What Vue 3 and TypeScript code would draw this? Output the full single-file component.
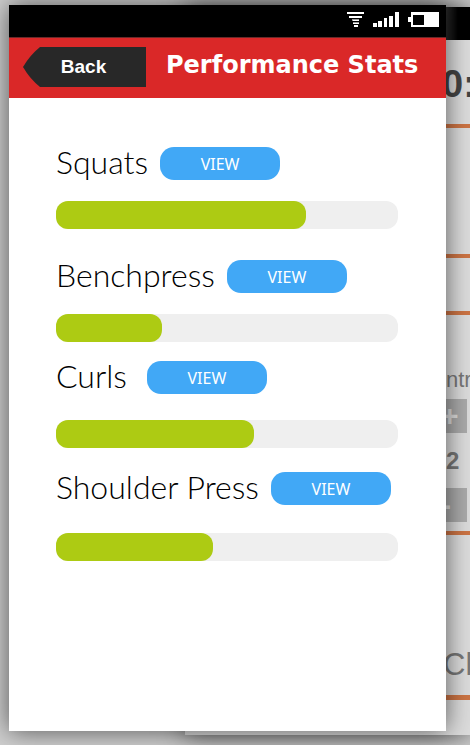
<script setup lang="ts">
interface Exercise {
  id: string
  name: string
  progress: number
  spacing: string
}

const exercises: Exercise[] = [
  { id: 'squats', name: 'Squats', progress: 73, spacing: 'regular' },
  { id: 'benchpress', name: 'Benchpress', progress: 31, spacing: 'loose' },
  { id: 'curls', name: 'Curls', progress: 58, spacing: 'tight' },
  { id: 'shoulder-press', name: 'Shoulder Press', progress: 46, spacing: 'deep' },
]
</script>

<template>
  <div class="stage">
    <aside class="backdrop" aria-hidden="true">
      <div class="backdrop-status"></div>
      <div class="timer">0:</div>
      <div class="panel panel-tall"></div>
      <div class="panel panel-short"></div>
      <div class="panel counter">
        <span class="counter-label">ntr</span>
        <span class="step">+</span>
        <span class="count">2</span>
        <span class="step">-</span>
      </div>
      <div class="panel clear">Cl</div>
    </aside>

    <main class="phone">
      <div class="status">
        <svg width="92" height="16" viewBox="0 0 92 16" fill="#fff" aria-hidden="true">
          <path d="M0 0h17v2H0zM2 4h13v2H2zM6 8h6v1H6zM6 11h6v1H6zM7 13h4v2H7z" />
          <path d="M5 7h7v2H5zM6 10h6v2H6z" opacity=".6" />
          <path d="M26 11h4v4h-4zM31 9h4v6h-4zM37 6h3v9h-3zM42 4h4v11h-4zM48 0h4v15h-4z" />
          <path fill-rule="evenodd" d="M64 0h28v15H64v-5h-3V5h3zM66 3v10h11V3z" />
        </svg>
      </div>
      <header class="bar">
        <button class="back" type="button">
          <svg class="back-shape" viewBox="0 0 123 40" preserveAspectRatio="none" aria-hidden="true">
            <path d="M0 20Q7 8 17 0H123V40H17Q7 32 0 20Z" fill="#282828" />
          </svg>
          <span class="back-text">Back</span>
        </button>
        <h1>Performance Stats</h1>
      </header>

      <section class="list">
        <article v-for="item in exercises" :key="item.id" class="exercise" :class="item.spacing">
          <div class="heading">
            <h2 :id="item.id">{{ item.name }}</h2>
            <button class="view" type="button">VIEW</button>
          </div>
          <div
            class="track"
            role="progressbar"
            :aria-labelledby="item.id"
            :aria-valuenow="item.progress"
            aria-valuemin="0"
            aria-valuemax="100"
          >
            <div class="fill" :style="{ width: item.progress + '%' }"></div>
          </div>
        </article>
      </section>
    </main>
  </div>
</template>

<style>
body {
  background: #cfcfcf;
}
</style>

<style scoped>
* {
  box-sizing: border-box;
}

.stage {
  position: relative;
  display: flex;
  min-height: 100vh;
  padding: 5px 24px 14px 9px;
  overflow: hidden;
}

.phone {
  position: relative;
  flex: 1;
  min-width: 0;
  background: #fff;
  box-shadow: 0 0 24px rgba(0, 0, 0, 0.6);
}

.status {
  display: flex;
  justify-content: flex-end;
  height: 32px;
  padding: 7px 7px 0 0;
  background: #000;
}

.bar {
  display: flex;
  align-items: flex-start;
  height: 61px;
  padding: 9px 14px 0;
  border-top: 1px solid #6a2a2a;
  background: #da2828;
}

.back {
  position: relative;
  flex: none;
  width: 123px;
  height: 40px;
  padding: 0 2px 0 0;
  border: 0;
  background: none;
  color: #fff;
  font: bold 19px "Liberation Sans", sans-serif;
}

.back-shape {
  position: absolute;
  inset: 0;
  width: 100%;
  height: 100%;
}

.back-text {
  position: relative;
}

h1 {
  flex: 1;
  margin: 0;
  padding-left: 20px;
  color: #fff;
  font: bold 24px/36px "DejaVu Sans", Verdana, sans-serif;
  white-space: nowrap;
}

.list {
  padding: 49px 48px 0 47px;
}

.exercise {
  display: grid;
  gap: 21px;
}

.loose {
  margin-top: 31px;
}

.tight {
  gap: 26px;
  margin-top: 19px;
}

.deep {
  gap: 28px;
  margin-top: 24px;
}

.heading {
  display: flex;
  align-items: flex-start;
  gap: 12px;
}

.tight .heading {
  gap: 20px;
}

h2 {
  margin: 0;
  color: #000;
  font: 300 32px/29px Lato, sans-serif;
  white-space: nowrap;
}

.view {
  flex: none;
  width: 120px;
  height: 33px;
  padding: 0;
  border: 0;
  border-radius: 14px;
  background: #41a8f6;
  color: #fff;
  font: 16px "Noto Sans", sans-serif;
}

.track {
  height: 28px;
  border-radius: 12px;
  background: #efefef;
}

.fill {
  height: 100%;
  border-radius: 12px;
  background: #adcb13;
}

.backdrop {
  position: absolute;
  inset: 7px 0 10px 185px;
  display: flex;
  flex-direction: column;
  align-items: stretch;
  background: #dcdcdc;
  box-shadow: 0 0 24px rgba(0, 0, 0, 0.6);
  color: #777;
  font-family: "Liberation Sans", sans-serif;
}

.backdrop-status {
  height: 33px;
  background: linear-gradient(to left, #000, #000 12px, #2a2a2a 24px);
}

.timer {
  height: 84px;
  padding-left: 257px;
  color: #444;
  font: bold 38px/88px "Liberation Sans", sans-serif;
  white-space: nowrap;
}

.panel {
  border-top: 4px solid #cc7444;
}

.panel-tall {
  height: 130px;
}

.panel-short {
  height: 57px;
}

.counter {
  display: flex;
  flex-direction: column;
  align-items: flex-start;
  height: 220px;
  padding: 52px 0 0 261px;
}

.counter-label {
  font-size: 22px;
  line-height: 26px;
}

.step {
  width: 21px;
  height: 34px;
  margin-top: 6px;
  background: #aaa;
  color: #ddd;
  font: bold 30px/34px "Liberation Sans", sans-serif;
  text-indent: -5px;
}

.count {
  height: 49px;
  font: bold 24px/56px "Liberation Sans", sans-serif;
}

.clear {
  flex: 1;
  padding: 110px 0 0 258px;
  font-size: 31px;
  line-height: 40px;
}

.clear::after {
  content: "";
  display: block;
  height: 5px;
  margin: 10px 0 0 -258px;
  background: #cc7444;
}
</style>
